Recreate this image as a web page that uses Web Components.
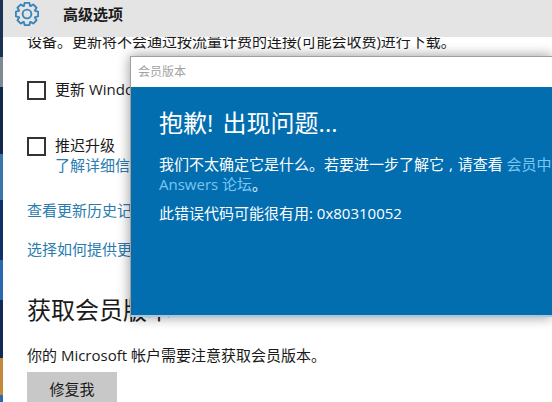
<!DOCTYPE html>
<html>
<head>
<meta charset="utf-8">
<style>
  html, body { margin: 0; height: 100%; overflow: hidden; background: #fff; }
  body { font-family: "Open Sans", "Noto Sans CJK SC", sans-serif; }
</style>
</head>
<body>
<settings-page>
  <span slot="title">高级选项</span>
  <option-check>更新 Windows 时提供其他产品的更新</option-check>
  <option-check>推迟升级<a slot="link">了解详细信息</a></option-check>
</settings-page>
<script>
// 8 teeth, one straight up
function gearPath() {
  const points = []
  for (let i = 0; i < 8; i++) {
    const a = i * 45
    for (const [da, r] of [[-21, 8.6], [-12, 11.4], [12, 11.4], [21, 8.6]]) {
      const rad = (a + da) * Math.PI / 180
      points.push((12 + r * Math.sin(rad)).toFixed(2) + " " + (12 - r * Math.cos(rad)).toFixed(2))
    }
  }
  return "M" + points.join("L") + "Z"
}

const pageTemplate = document.createElement("template")
pageTemplate.innerHTML = `
  <style>
    :host {
      display: flex;
      position: relative;
      width: 552px;
      height: 402px;
      overflow: hidden;
      background: #fff;
      color: #1a1a1a;
      font-size: 15px;
    }
    .desktop {
      width: 3px;
      flex: none;
      background: linear-gradient(#1b3350 0 57px, #7d8a92 57px 87px, #12284a 87px 154px, #3a76ac 154px 200px, #10306a 200px 260px, #2a69b0 260px 300px, #0e2a55 300px 358px, #c48a3c 358px 395px, #2a6ab0 395px);
    }
    .main { flex: 1; min-width: 0; display: flex; flex-direction: column; }
    .bar {
      height: 37px;
      box-sizing: border-box;
      flex: none;
      background: #e4e4e4;
      display: flex;
      align-items: flex-start;
      font-weight: bold;
      line-height: 24px;
      padding: 2px 0 0 12px;
      gap: 24px;
    }
    .top {
      height: 19px;
      flex: none;
      padding-left: 24px;
      white-space: nowrap;
      line-height: 9px;
      overflow: hidden;
    }
    .content { padding: 23px 0 0 24px; display: flex; flex-direction: column; }
    .options { display: flex; flex-direction: column; gap: 35px; }
    .history { color: #2a7cb0; line-height: 20px; white-space: nowrap; margin-top: 25px; }
    .history + .history { margin-top: 19px; }
    h2 { margin: 34px 0 0; font-size: 24px; font-weight: normal; line-height: 34px; white-space: nowrap; }
    p { margin: 18px 0 0; line-height: 20px; white-space: nowrap; }
    button {
      display: block;
      margin-top: 7px;
      width: 90px;
      height: 32px;
      flex: none;
      border: 0;
      padding: 0;
      background: #c8c8c8;
      color: #1a1a1a;
      font: inherit;
    }
    .dialog {
      position: absolute;
      left: 130px;
      top: 56px;
      right: 0;
      height: 261px;
      display: flex;
      flex-direction: column;
      box-shadow: 0 0 12px rgba(0,0,0,.22);
      border: solid #a0a0a0;
      border-width: 1px 0 0 1px;
      box-sizing: border-box;
      overflow: hidden;
    }
    .shadow {
      position: absolute;
      left: 130px;
      top: 56px;
      right: 0;
      height: 261px;
      box-shadow: 0 0 12px rgba(0,0,0,.22);
    }
    .dialog-title {
      height: 30px;
      flex: none;
      background: #fff;
      color: #a2a2a2;
      font-size: 12px;
      line-height: 30px;
      padding-left: 7px;
    }
    .dialog-body {
      flex: 1;
      background: #026eb0;
      color: #fff;
      padding: 18px 0 0 28px;
      white-space: nowrap;
      border-bottom: 2px solid #a9c6e0;
    }
    .dialog-body h1 { margin: 0; font-size: 24px; font-weight: normal; line-height: 36px; word-spacing: 3px; }
    .dialog-body div { margin-top: 13px; line-height: 20px; }
    .dialog-body a { color: #7ac6f2; }
    .dialog-body .comma { margin: 0 1px; }
    .dialog-body .code { margin-top: 9px; }
  </style>
  <div class="desktop"></div>
  <div class="main">
    <div class="bar">
      <svg width="24" height="24" viewBox="0 0 24 24" fill="none" stroke="#3a86ba" stroke-width="1.9" stroke-linejoin="round" style="flex:none">
        <path d="${gearPath()}"/>
        <circle cx="12" cy="12" r="4.4"/>
      </svg>
      <slot name="title"></slot>
    </div>
    <div class="top">设备。更新将不会通过按流量计费的连接(可能会收费)进行下载。</div>
    <div class="content">
      <div class="options"><slot></slot></div>
      <div class="history">查看更新历史记录</div>
      <div class="history">选择如何提供更新</div>
      <h2>获取会员版本</h2>
      <p>你的 Microsoft 帐户需要注意获取会员版本。</p>
      <button>修复我</button>
    </div>
  </div>
  <div class="shadow"></div>
  <div class="dialog">
    <div class="dialog-title">会员版本</div>
    <div class="dialog-body">
      <h1>抱歉! 出现问题...</h1>
      <div>我们不太确定它是什么。若要进一步了解它<span class="comma"> , </span>请查看 <a>会员中<br>Answers 论坛</a>。</div>
      <div class="code">此错误代码可能很有用: 0x80310052</div>
    </div>
  </div>
`

class SettingsPage extends HTMLElement {
  constructor() {
    super()
    this.attachShadow({ mode: "open" })
    this.shadowRoot.appendChild(pageTemplate.content.cloneNode(true))
  }
}

const checkTemplate = document.createElement("template")
checkTemplate.innerHTML = `
  <style>
    :host { display: flex; gap: 9px; align-items: flex-start; white-space: nowrap; line-height: 20px; }
    .box { width: 19px; height: 19px; margin-top: 2px; box-sizing: border-box; border: 2px solid #333; flex: none; }
    .text { display: flex; flex-direction: column; }
    ::slotted(a) { color: #2a7cb0; display: block; }
  </style>
  <div class="box"></div>
  <div class="text"><span><slot></slot></span><slot name="link"></slot></div>
`

class OptionCheck extends HTMLElement {
  constructor() {
    super()
    this.attachShadow({ mode: "open" })
    this.shadowRoot.appendChild(checkTemplate.content.cloneNode(true))
  }
}

window.customElements.define("settings-page", SettingsPage)
window.customElements.define("option-check", OptionCheck)
</script>
</body>
</html>
